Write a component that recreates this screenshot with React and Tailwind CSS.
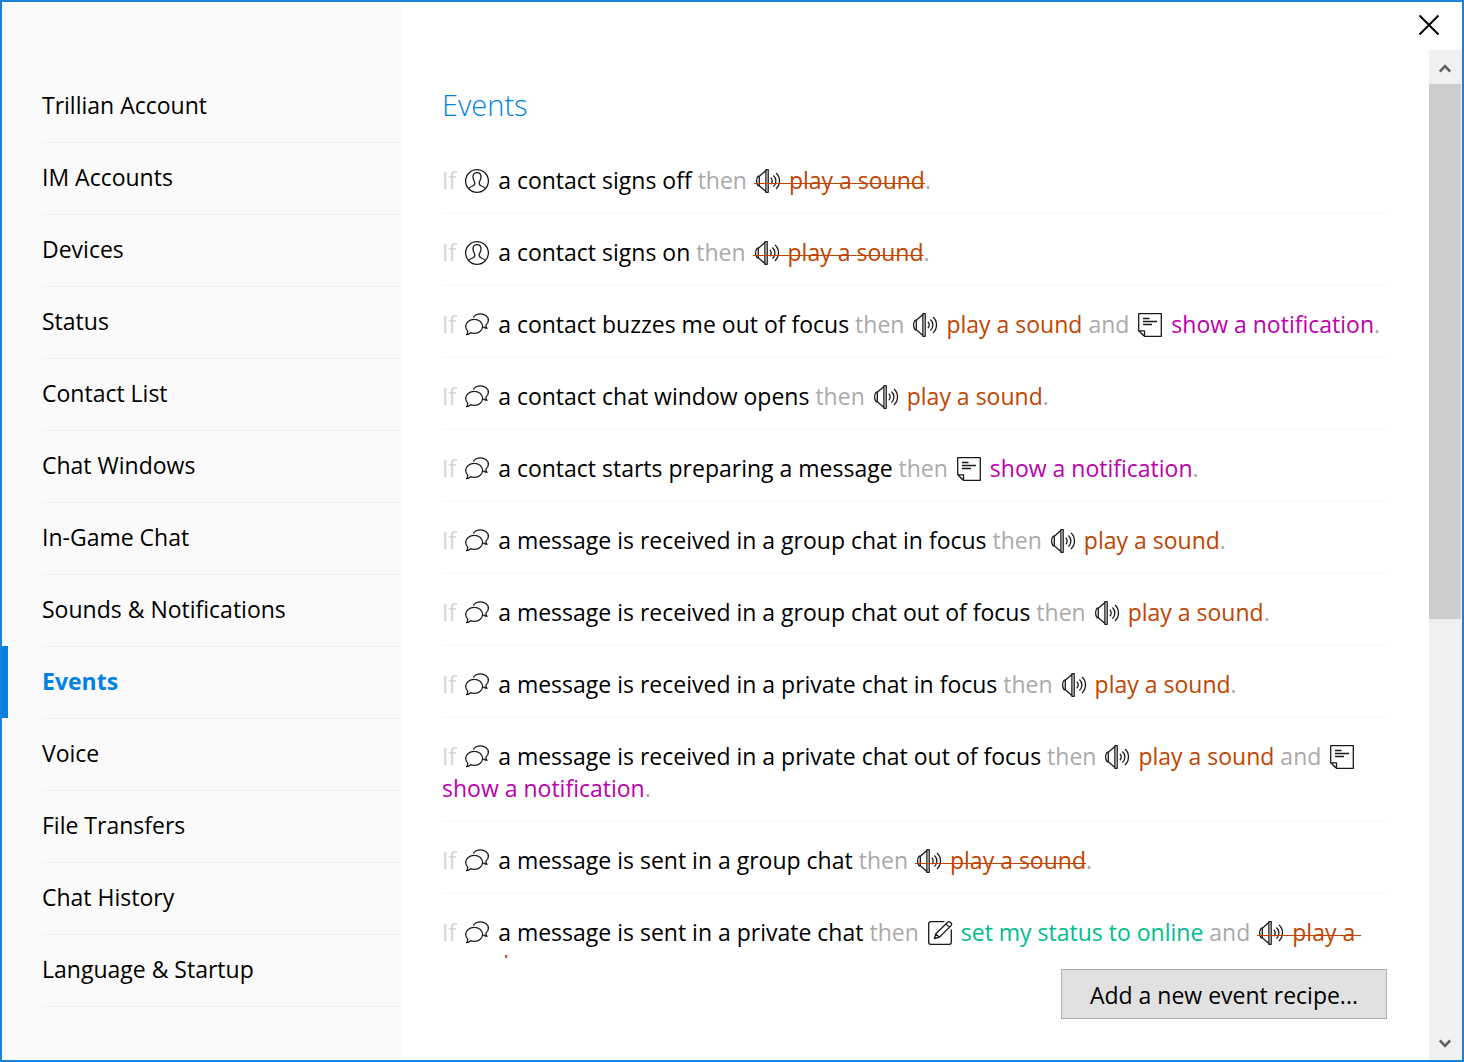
import React from "react";

const sections = [
  "Trillian Account",
  "IM Accounts",
  "Devices",
  "Status",
  "Contact List",
  "Chat Windows",
  "In-Game Chat",
  "Sounds & Notifications",
  "Events",
  "Voice",
  "File Transfers",
  "Chat History",
  "Language & Startup",
];

const sound = { kind: "sound", text: "play a sound" };
const mutedSound = { kind: "sound", text: "play a sound", off: true };
const notify = { kind: "note", text: "show a notification" };
const status = { kind: "status", text: "set my status to online" };

const recipes = [
  { icon: "person", when: "a contact signs off", actions: [mutedSound] },
  { icon: "person", when: "a contact signs on", actions: [mutedSound] },
  { icon: "chat", when: "a contact buzzes me out of focus", actions: [sound, notify] },
  { icon: "chat", when: "a contact chat window opens", actions: [sound] },
  { icon: "chat", when: "a contact starts preparing a message", actions: [notify] },
  { icon: "chat", when: "a message is received in a group chat in focus", actions: [sound] },
  { icon: "chat", when: "a message is received in a group chat out of focus", actions: [sound] },
  { icon: "chat", when: "a message is received in a private chat in focus", actions: [sound] },
  { icon: "chat", when: "a message is received in a private chat out of focus", actions: [sound, notify] },
  { icon: "chat", when: "a message is sent in a group chat", actions: [mutedSound] },
  { icon: "chat", when: "a message is sent in a private chat", actions: [status, mutedSound] },
];

const actionColor = {
  sound: "text-[#c14400]",
  note: "text-[#bd00ab]",
  status: "text-[#00bd8b]",
};

const shapes = {
  person: (
    <>
      <circle cx="12" cy="12" r="11.4" />
      <path d="M12 3.700c-2.700 0-4 1.800-4 4.300 0 1.800.5 2.800 1.100 3.800.6 1 .9 1.800.7 2.900-.2 1.300-1 1.800-2.300 2.300-1.700.6-2.900 1.200-3.800 2.500M12 3.700c2.700 0 4 1.800 4 4.300 0 1.800-.5 2.800-1.100 3.800-.6 1-.9 1.800-.7 2.900.2 1.300 1 1.800 2.300 2.300 1.700.6 2.900 1.200 3.800 2.500" />
    </>
  ),
  chat: (
    <>
      <path d="M9.200 6.400c4.700 0 8.500 3 8.500 6.900s-3.800 7-8.500 7c-1.300 0-2.500-.2-3.600-.6-.9.900-2.200 1.700-4 1.900.8-.9 1.200-2.200 1.100-3.600C1.400 16.700.7 15.100.7 13.300c0-3.900 3.800-6.900 8.500-6.900z" />
      <path d="M8.300 4.300C9.700 2.100 12.500.8 15.500.8c4.400 0 7.900 2.800 7.900 6.400 0 2-1 3.700-2.500 4.900-.1 1.200.3 2.400 1.100 3.300-1.700-.2-2.900-.8-3.700-1.700" />
    </>
  ),
  sound: (
    <>
      <path d="M9.900.7h2.300v22.600H9.900zM9.900 1.600 3.300 7.200H2.200C1.200 8.500.6 10.200.6 12s.6 3.500 1.600 4.800h1.100l6.600 5.600M3.300 7.200v9.600" />
      <path d="M14.800 8.800c.9.800 1.400 1.900 1.400 3.200s-.5 2.400-1.400 3.200M17.400 6.400c1.600 1.400 2.500 3.400 2.500 5.600s-.9 4.200-2.500 5.600M20 4.100c2.200 2 3.500 4.800 3.500 7.900s-1.300 5.900-3.500 7.900" />
    </>
  ),
  note: (
    <>
      <path d="M.7.700h22.600v22.600H6.500L.7 17.800zM.9 17.900h5.600v5.200M2.500 19.600l2.600 2.600" />
      <path d="M5 5.500h6.500M5 8.500h14M5 11.500h9" strokeWidth="1.500" />
    </>
  ),
  status: (
    <>
      <path d="M16.500.7H2.700a2 2 0 0 0-2 2v18.600a2 2 0 0 0 2 2h18.600a2 2 0 0 0 2-2V8.500" />
      <path d="m6.500 17.500 1.300-4.800L19.700 1.200a1.700 1.700 0 0 1 2.500 0l.9.900a1.700 1.700 0 0 1 0 2.500L11.300 16.200zM7.800 12.700l3.500 3.500M17.900 2.900l3.500 3.500" />
    </>
  ),
};

function Icon({ name, struck }) {
  return (
    <svg
      viewBox="0 0 24 24"
      aria-hidden="true"
      className="mx-[3px] inline-block size-6 overflow-visible align-[-4px] text-[#1a1a1a]"
      fill="none"
      stroke="currentColor"
      strokeWidth="1.3"
      strokeLinejoin="round"
    >
      {shapes[name]}
      {struck && <path d="M-2 14.500h36" stroke="#c14400" strokeWidth="1" shapeRendering="crispEdges" />}
    </svg>
  );
}

function Action({ kind, text, off }) {
  const words = text.split(" ");
  const last = words.pop();
  return (
    <a href="#recipe" className={actionColor[kind]}>
      <Icon name={kind} struck={off} />{" "}
      {off ? (
        <s className="underline decoration-1 underline-offset-[-6px] [text-decoration-skip-ink:none]">
          {words.join(" ")}
          {"\u00a0"}
          <wbr />
          {last}
        </s>
      ) : (
        text
      )}
    </a>
  );
}

function Recipe({ icon, when, actions }) {
  return (
    <li className="border-b-2 border-[#fafafa] pt-[22px] pb-4 text-[#aaaaaa]">
      <span className="text-[#d4d4d4]">If</span>{" "}
      <a href="#recipe" className="text-black">
        <Icon name={icon} /> {when}
      </a>{" "}
      then{" "}
      {actions.map((action, i) => (
        <React.Fragment key={action.kind}>
          {i > 0 && " and "}
          <Action {...action} />
        </React.Fragment>
      ))}
      .
    </li>
  );
}

function Chevron({ down }) {
  return (
    <svg viewBox="0 0 12 10" className="h-2.5 w-3" aria-hidden="true" fill="none" stroke="#606060" strokeWidth="2.6">
      <path d={down ? "M.8 1.500 6 6.900l5.200-5.400" : "M.8 8.500 6 3.100l5.200 5.400"} />
    </svg>
  );
}

export default function App() {
  return (
    <div className="flex h-screen border-2 border-[#1a82d7] bg-white font-['Open_Sans','Noto_Sans',sans-serif] text-[23px] leading-8 text-black">
      <nav aria-label="Settings" className="w-[399px] shrink-0 overflow-hidden bg-[#fafafa] pt-[68px]">
        <ul>
          {sections.map((name) => {
            const active = name === "Events";
            return (
              <li
                key={name}
                className={"group " + (active ? "border-l-[6px] border-[#0082e6] pl-[34px]" : "pl-10")}
              >
                <a
                  href="#section"
                  aria-current={active ? "page" : undefined}
                  className={
                    "flex h-[72px] items-center border-t border-[#f0f0f0] pb-[3px] group-first:border-transparent group-last:h-[73px] group-last:border-b " +
                    (active ? "font-bold text-[#0082e6]" : "")
                  }
                >
                  {name}
                </a>
              </li>
            );
          })}
        </ul>
      </nav>

      <main className="flex min-w-0 flex-1 flex-col">
        <div className="flex h-12 shrink-0 justify-end pr-[22px] pb-0.5">
          <button type="button" aria-label="Close" className="flex items-center">
            <svg viewBox="0 0 22 22" className="size-[22px]" aria-hidden="true" stroke="#000" strokeWidth="2">
              <path d="m1.500 1.500 19 19m0-19-19 19" />
            </svg>
          </button>
        </div>

        <div className="flex min-h-0 flex-1">
          <section className="flex min-w-0 flex-1 flex-col pr-[42px] pb-[41px] pl-[41px]">
            <div className="min-h-0 flex-1 overflow-hidden">
              <h1 className="pt-[35px] pb-[17px] text-[29px] leading-10 font-light text-[#0082e6]">Events</h1>
              <ul>
                {recipes.map((recipe) => (
                  <Recipe key={recipe.when} {...recipe} />
                ))}
              </ul>
            </div>
            <button
              type="button"
              className="mt-[11px] h-[50px] shrink-0 self-end border border-[#adadad] bg-[#e1e1e1] px-7 pt-0.5"
            >
              Add a new event recipe...
            </button>
          </section>

          <div className="flex w-[33px] shrink-0 flex-col bg-[#f0f0f0] pr-px">
            <button type="button" aria-label="Scroll up" className="flex h-[34px] items-center justify-center pt-0.5">
              <Chevron />
            </button>
            <div className="min-h-0 flex-1">
              <div className="h-[56.8%] bg-[#cdcdcd]" />
            </div>
            <button type="button" aria-label="Scroll down" className="flex h-[34px] items-center justify-center pt-0.5">
              <Chevron down />
            </button>
          </div>
        </div>
      </main>
    </div>
  );
}
